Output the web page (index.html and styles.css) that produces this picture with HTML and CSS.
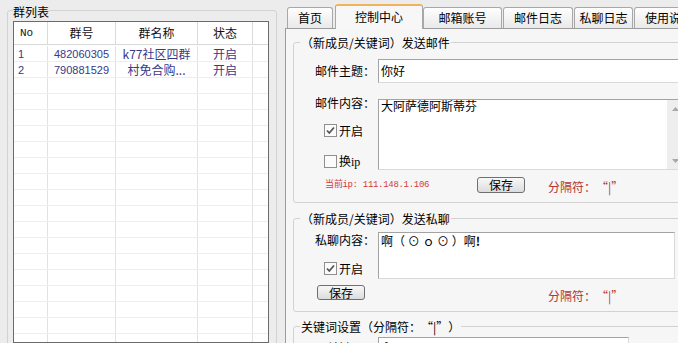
FILE: index.html
```html
<!DOCTYPE html>
<html lang="zh-CN">
<head>
<meta charset="utf-8">
<link rel="stylesheet" href="styles.css">
</head>
<body>
<div class="app">
  <div class="left">
    <div class="lgroup">
      <div class="gtitle">群列表</div>
      <div class="list">
        <div class="lhead">
          <div class="c c1 no">No</div><div class="c c2">群号</div><div class="c c3">群名称</div><div class="c c4">状态</div><div class="c c5"></div>
        </div>
        <div class="rows">
          <div class="lrow"><div class="c c1">1</div><div class="c c2 num">482060305</div><div class="c c3">k77社区四群</div><div class="c c4">开启</div><div class="c c5"></div></div>
          <div class="lrow"><div class="c c1">2</div><div class="c c2 num">790881529</div><div class="c c3">村免合购...</div><div class="c c4">开启</div><div class="c c5"></div></div>
          <div class="lrow"><div class="c c1"></div><div class="c c2"></div><div class="c c3"></div><div class="c c4"></div><div class="c c5"></div></div>
          <div class="lrow"><div class="c c1"></div><div class="c c2"></div><div class="c c3"></div><div class="c c4"></div><div class="c c5"></div></div>
          <div class="lrow"><div class="c c1"></div><div class="c c2"></div><div class="c c3"></div><div class="c c4"></div><div class="c c5"></div></div>
          <div class="lrow"><div class="c c1"></div><div class="c c2"></div><div class="c c3"></div><div class="c c4"></div><div class="c c5"></div></div>
          <div class="lrow"><div class="c c1"></div><div class="c c2"></div><div class="c c3"></div><div class="c c4"></div><div class="c c5"></div></div>
          <div class="lrow"><div class="c c1"></div><div class="c c2"></div><div class="c c3"></div><div class="c c4"></div><div class="c c5"></div></div>
          <div class="lrow"><div class="c c1"></div><div class="c c2"></div><div class="c c3"></div><div class="c c4"></div><div class="c c5"></div></div>
          <div class="lrow"><div class="c c1"></div><div class="c c2"></div><div class="c c3"></div><div class="c c4"></div><div class="c c5"></div></div>
          <div class="lrow"><div class="c c1"></div><div class="c c2"></div><div class="c c3"></div><div class="c c4"></div><div class="c c5"></div></div>
          <div class="lrow"><div class="c c1"></div><div class="c c2"></div><div class="c c3"></div><div class="c c4"></div><div class="c c5"></div></div>
          <div class="lrow"><div class="c c1"></div><div class="c c2"></div><div class="c c3"></div><div class="c c4"></div><div class="c c5"></div></div>
          <div class="lrow"><div class="c c1"></div><div class="c c2"></div><div class="c c3"></div><div class="c c4"></div><div class="c c5"></div></div>
          <div class="lrow"><div class="c c1"></div><div class="c c2"></div><div class="c c3"></div><div class="c c4"></div><div class="c c5"></div></div>
          <div class="lrow"><div class="c c1"></div><div class="c c2"></div><div class="c c3"></div><div class="c c4"></div><div class="c c5"></div></div>
          <div class="lrow"><div class="c c1"></div><div class="c c2"></div><div class="c c3"></div><div class="c c4"></div><div class="c c5"></div></div>
          <div class="lrow"><div class="c c1"></div><div class="c c2"></div><div class="c c3"></div><div class="c c4"></div><div class="c c5"></div></div>
          <div class="lrow"><div class="c c1"></div><div class="c c2"></div><div class="c c3"></div><div class="c c4"></div><div class="c c5"></div></div>
        </div>
      </div>
    </div>
  </div>
  <div class="right">
    <div class="tabs">
      <div class="tab t1">首页</div>
      <div class="tab t2 sel">控制中心</div>
      <div class="tab t3">邮箱账号</div>
      <div class="tab t4">邮件日志</div>
      <div class="tab t5">私聊日志</div>
      <div class="tab t6">使用说明</div>
    </div>
    <div class="panel">
      <div class="gbox g1">
        <div class="gtitle">（新成员/关键词）发送邮件</div>
        <div class="frow">
          <div class="lab single">邮件主题：</div>
          <div class="field f1">你好</div>
        </div>
        <div class="frow r2">
          <div class="lcol">
            <div class="lab l1">邮件内容：</div>
            <div class="chk c1a"><svg width="13" height="13" viewBox="0 0 13 13"><rect x="0.5" y="0.5" width="12" height="12" fill="#fbfbfb" stroke="#8f8f8f"/><path d="M3 6.5 L5.3 9 L10 3.5" fill="none" stroke="#555" stroke-width="1.8"/></svg><span>开启</span></div>
            <div class="chk c1b"><svg width="13" height="13" viewBox="0 0 13 13"><rect x="0.5" y="0.5" width="12" height="12" fill="#fbfbfb" stroke="#8f8f8f"/></svg><span>换<span class="lat">ip</span></span></div>
          </div>
          <div class="field ta1">
            <div class="tatext">大阿萨德阿斯蒂芬</div>
            <div class="sb">
              <div class="sbbtn"><svg width="7" height="4" viewBox="0 0 7 4"><path d="M0 4 L3.5 0 L7 4 Z" fill="#a9a9a9"/></svg></div>
              <div class="sbtrack"></div>
              <div class="sbbtn"><svg width="7" height="4" viewBox="0 0 7 4"><path d="M0 0 L3.5 4 L7 0 Z" fill="#a9a9a9"/></svg></div>
            </div>
          </div>
        </div>
        <div class="brow b1">
          <div class="ip">当前ip: 111.148.1.106</div>
          <div class="btn">保存</div>
          <div class="sep">分隔符：<span class="ql">“</span>|<span class="qr">”</span></div>
        </div>
      </div>
      <div class="gbox g2">
        <div class="gtitle">（新成员/关键词）发送私聊</div>
        <div class="frow r2b">
          <div class="lcol">
            <div class="lab l2">私聊内容：</div>
            <div class="chk c2a"><svg width="13" height="13" viewBox="0 0 13 13"><rect x="0.5" y="0.5" width="12" height="12" fill="#fbfbfb" stroke="#8f8f8f"/><path d="M3 6.5 L5.3 9 L10 3.5" fill="none" stroke="#555" stroke-width="1.8"/></svg><span>开启</span></div>
          </div>
          <div class="field ta2"><div class="tatext t2t">啊（ ⊙ ｏ ⊙ ）啊<b>!</b></div></div>
        </div>
        <div class="brow b2">
          <div class="btn b2btn">保存</div>
          <div class="sep sep2">分隔符：<span class="ql">“</span>|<span class="qr">”</span></div>
        </div>
      </div>
      <div class="gbox g3">
        <div class="gtitle">关键词设置（分隔符：<span class="ql">“</span>|<span class="qr">”</span>）</div>
        <div class="frow r3">
          <div class="lab single">关键词：</div>
          <div class="field f3">啊</div>
        </div>
      </div>
    </div>
  </div>
</div>
</body>
</html>
```

FILE: styles.css
```css
body {
  margin: 0;
  width: 678px;
  height: 343px;
  overflow: hidden;
  background: #ececec;
  font-family: "Noto Sans CJK SC", sans-serif;
  font-size: 12px;
  color: #000;
}
.app {
  display: flex;
  height: 343px;
  overflow: hidden;
}
.left {
  width: 285px;
  flex: none;
}
.lgroup {
  margin: 10px 0 0 7px;
  width: 270px;
  height: 340px;
  box-sizing: border-box;
  padding: 0 7px 0 5px;
  border: 1px solid #d3d3d3;
  border-radius: 3px;
}
.gtitle {
  display: block;
  width: max-content;
  line-height: 14px;
  margin-top: -7px;
  background: #ececec;
}
.ql, .qr {
  display: inline-block;
  width: 12px;
}
.ql {
  text-align: right;
}
.qr {
  text-align: left;
}
.lgroup .gtitle {
  margin-top: -6px;
}
.list {
  margin-top: 2px;
  border: 1px solid #6b6b6b;
  background: #fff;
  height: 320px;
  overflow: hidden;
}
.lhead {
  display: flex;
  height: 22px;
  border-bottom: 1px solid #d9d9d9;
}
.rows {
  padding-top: 1px;
}
.lrow {
  display: flex;
  height: 16px;
  box-sizing: border-box;
  border-bottom: 1px solid #eeeeee;
}
.c {
  box-sizing: border-box;
  border-right: 1px solid #e2e2e2;
  text-align: center;
  white-space: nowrap;
}
.c1 { width: 34px; }
.c2 { width: 68px; }
.c3 { width: 82px; }
.c4 { width: 55px; }
.c5 { width: 15px; border-right: none; }
.lhead .c {
  line-height: 22px;
  border-right-color: #dadada;
  color: #111;
}
.lhead .no {
  text-align: left;
  padding-left: 6px;
  font-family: "Liberation Mono", monospace;
  font-size: 11px;
}
.lrow .c {
  line-height: 14px;
  padding-top: 1px;
  color: #38388a;
}
.lrow .c1 {
  text-align: left;
  padding-left: 4px;
  font-family: "Liberation Sans", sans-serif;
  font-size: 11px;
}
.num {
  font-family: "Liberation Sans", sans-serif;
  font-size: 11px;
}
.right {
  width: 412px;
  flex: none;
}
.tabs {
  display: flex;
  align-items: flex-end;
  height: 28px;
  border-bottom: 1px solid #9c9c9c;
  padding-left: 2px;
}
.tab {
  height: 21px;
  box-sizing: border-box;
  border: 1px solid #a8a8a8;
  border-bottom: none;
  border-radius: 3px 3px 0 0;
  background: linear-gradient(#fefefe, #e9e9e9);
  text-align: center;
  line-height: 20px;
  margin-right: 1px;
  flex: none;
  white-space: nowrap;
}
.tab.sel {
  position: relative;
  height: 25px;
  margin-bottom: -1px;
  border-top: 2px solid #f2b25c;
  background: #f7f7f7;
  line-height: 22px;
}
.t1 { width: 46px; margin-right: 2px; }
.t2 { width: 88px; margin-right: 0; }
.t3 { width: 79px; }
.t4 { width: 70px; }
.t5 { width: 59px; }
.t6 { width: 70px; }
.panel {
  border-left: 1px solid #9c9c9c;
  background: #f6f6f6;
  padding: 13px 0 0 7px;
  height: 301px;
}
.gbox {
  width: 400px;
  box-sizing: border-box;
  border: 1px solid #d2d2d2;
  border-radius: 3px;
}
.panel .gtitle {
  margin-left: 6px;
  padding: 0 1px;
  background: #f6f6f6;
}
.frow {
  display: flex;
  margin-top: 9px;
}
.lab {
  width: 84px;
  box-sizing: border-box;
  text-align: right;
  padding-right: 3px;
  line-height: 12px;
  white-space: nowrap;
}
.lab.single {
  line-height: 24px;
}
.field {
  box-sizing: border-box;
  border: 1px solid;
  border-color: #a3a3a3 #dadada #dadada #a3a3a3;
  background: #fff;
  padding-left: 2px;
  white-space: nowrap;
}
.f1 {
  width: 307px;
  height: 24px;
  line-height: 22px;
}
.r2 {
  margin-top: 16px;
}
.lcol {
  width: 84px;
  display: flex;
  flex-direction: column;
}
.l1 { margin-top: -2px; }
.chk {
  display: flex;
  align-items: center;
  margin-left: 30px;
  height: 13px;
  line-height: 13px;
}
.chk span {
  margin-left: 2px;
}
.chk .lat {
  margin-left: 0;
  font-family: "Liberation Serif", serif;
  font-size: 12px;
}
.c1a { margin-top: 15px; }
.c1b { margin-top: 18px; }
.ta1 {
  width: 307px;
  height: 71px;
  display: flex;
  padding-left: 0;
}
.tatext {
  flex: 1;
  padding-left: 2px;
  line-height: 12px;
}
.sb {
  width: 17px;
  flex: none;
  display: flex;
  flex-direction: column;
  background: #eeeeee;
}
.sbbtn {
  height: 17px;
  display: flex;
  align-items: center;
  justify-content: center;
}
.sbtrack {
  flex: 1;
}
.brow {
  display: flex;
  align-items: flex-start;
}
.b1 {
  margin-top: 7px;
  padding-bottom: 7px;
}
.ip {
  margin-left: 31px;
  width: 152px;
  font-family: "Liberation Mono", monospace;
  font-size: 9px;
  letter-spacing: -0.3px;
  color: #d43a3a;
  line-height: 16px;
  white-space: nowrap;
}
.btn {
  width: 48px;
  height: 16px;
  box-sizing: border-box;
  border: 1px solid #6f6f6f;
  border-radius: 3px;
  background: linear-gradient(#f8f8f8, #dcdcdc);
  text-align: center;
  line-height: 14px;
}
.sep {
  margin-left: 23px;
  margin-top: 2px;
  color: #b23434;
  line-height: 16px;
  white-space: nowrap;
}
.g2 {
  margin-top: 15px;
}
.r2b {
  margin-top: 6px;
}
.l2 { margin-top: 2px; }
.c2a { margin-top: 16px; }
.ta2 {
  width: 297px;
  height: 47px;
  padding-left: 0;
}
.t2t {
  padding-top: 2px;
}
.b2 {
  margin-top: 6px;
  padding-bottom: 8px;
}
.b2btn {
  height: 15px;
  line-height: 13px;
  margin-left: 23px;
}
.sep2 {
  margin-left: 183px;
  margin-top: 3px;
  line-height: 15px;
}
.g3 {
  margin-top: 14px;
  height: 40px;
}
.r3 {
  margin-top: 3px;
}
.r3 .lab.single {
  line-height: 22px;
}
.f3 {
  width: 251px;
  height: 22px;
  line-height: 20px;
}
```
